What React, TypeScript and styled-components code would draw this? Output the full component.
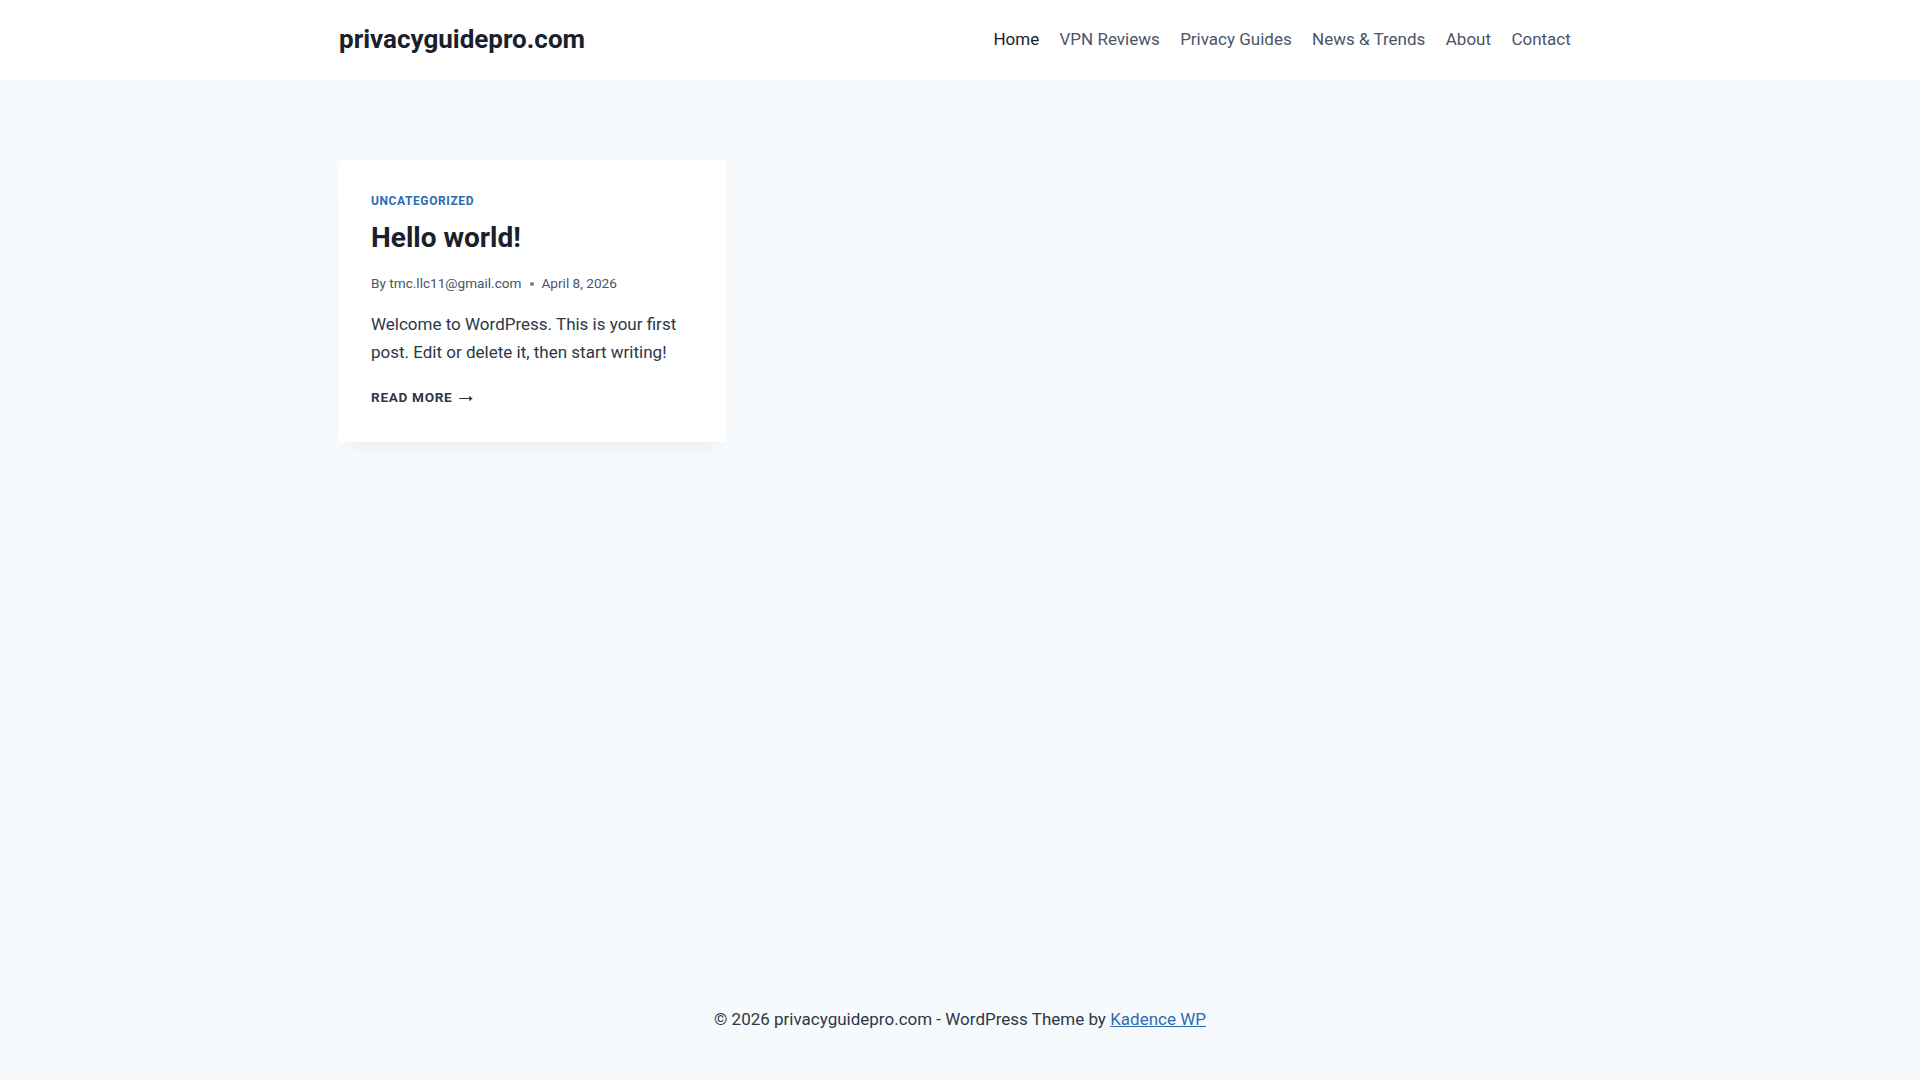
import React from 'react';
import styled, { createGlobalStyle } from 'styled-components';

const GlobalStyle = createGlobalStyle`
  html, body {
    margin: 0;
    padding: 0;
  }

  body {
    font-family: Roboto, 'Noto Sans', 'Liberation Sans', sans-serif;
    font-size: 17px;
    line-height: 1.6;
    color: #2d3748;
    background: #f7fafc;
    -webkit-font-smoothing: antialiased;
  }

  * {
    box-sizing: border-box;
  }
`;

const menuItems = [
  { label: 'Home', current: true },
  { label: 'VPN Reviews' },
  { label: 'Privacy Guides' },
  { label: 'News & Trends' },
  { label: 'About' },
  { label: 'Contact' },
];

const ArrowIcon = () => (
  <svg width="14" height="14" viewBox="0 0 27 28" fill="currentColor" aria-hidden="true">
    <path d="M27 13.953c0 0.141-0.063 0.281-0.156 0.375l-6 5.531c-0.156 0.141-0.359 0.172-0.547 0.094-0.172-0.078-0.297-0.25-0.297-0.453v-3.5h-19.5c-0.281 0-0.5-0.219-0.5-0.5v-1c0-0.281 0.219-0.5 0.5-0.5h19.5v-3.5c0-0.203 0.109-0.375 0.297-0.453s0.391-0.047 0.547 0.078l6 5.469c0.094 0.094 0.156 0.219 0.156 0.359v0z" />
  </svg>
);

const App = () => {
  return (
    <>
      <GlobalStyle />
      <Page>
        <Header>
          <Container>
            <SiteTitle href="#">privacyguidepro.com</SiteTitle>
            <nav>
              <MenuList>
                {menuItems.map((item) => (
                  <li key={item.label}>
                    <MenuLink href="#" $current={item.current}>
                      {item.label}
                    </MenuLink>
                  </li>
                ))}
              </MenuList>
            </nav>
          </Container>
        </Header>

        <Main>
          <Container>
            <PostGrid>
              <Card>
                <Taxonomy href="#">Uncategorized</Taxonomy>
                <EntryTitle>
                  <a href="#">Hello world!</a>
                </EntryTitle>
                <Meta>
                  <span>
                    By <a href="#">tmc.llc11@gmail.com</a>
                  </span>
                  <Dot />
                  <span>April 8, 2026</span>
                </Meta>
                <Summary>
                  Welcome to WordPress. This is your first post. Edit or delete it, then
                  start writing!
                </Summary>
                <MoreLink href="#">
                  Read More
                  <ArrowIcon />
                </MoreLink>
              </Card>
            </PostGrid>
          </Container>
        </Main>

        <Footer>
          <FooterText>
            © 2026 privacyguidepro.com - WordPress Theme by <a href="#">Kadence WP</a>
          </FooterText>
        </Footer>
      </Page>
    </>
  );
};

export default App;

const Page = styled.div`
  min-height: 100vh;
  display: flex;
  flex-direction: column;
`;

const Container = styled.div`
  width: 100%;
  max-width: 1290px;
  margin: 0 auto;
  padding: 0 24px;
`;

const Header = styled.header`
  background: #ffffff;
  height: 80px;
  display: flex;
  align-items: center;

  ${Container} {
    display: flex;
    align-items: center;
    justify-content: space-between;
  }
`;

const SiteTitle = styled.a`
  font-size: 26px;
  font-weight: 700;
  line-height: 1.2;
  color: #1a202c;
  text-decoration: none;
`;

const MenuList = styled.ul`
  display: flex;
  list-style: none;
  margin: 0;
  padding: 0;
`;

const MenuLink = styled.a<{ $current?: boolean }>`
  display: block;
  padding: 0.6em;
  font-size: 17px;
  line-height: 1.6;
  color: ${({ $current }) => ($current ? '#1a202c' : '#4a5568')};
  text-decoration: none;
`;

const Main = styled.main`
  flex: 1;
  padding-top: 80px;
`;

const PostGrid = styled.div`
  display: grid;
  grid-template-columns: repeat(3, 1fr);
  gap: 40px;
`;

const Card = styled.article`
  display: flex;
  flex-direction: column;
  align-items: flex-start;
  background: #ffffff;
  border-radius: 4px;
  padding: 32px 32px 34px;
  box-shadow: 0px 15px 15px -10px rgba(0, 0, 0, 0.05);
`;

const Taxonomy = styled.a`
  font-size: 12px;
  font-weight: 700;
  line-height: 1.6;
  letter-spacing: 0.05em;
  text-transform: uppercase;
  color: #2b6cb0;
  text-decoration: none;
  margin-bottom: 6px;
`;

const EntryTitle = styled.h2`
  margin: 0;
  font-size: 28px;
  font-weight: 700;
  line-height: 1.5;

  a {
    color: #1a202c;
    text-decoration: none;
  }
`;

const Meta = styled.div`
  display: flex;
  align-items: center;
  margin-top: 13.6px;
  font-size: 13.6px;
  line-height: 1.6;
  color: #4a5568;

  a {
    color: #4a5568;
    text-decoration: none;
  }
`;

const Dot = styled.span`
  display: inline-block;
  width: 4px;
  height: 4px;
  border-radius: 50%;
  background: #718096;
  margin: 0 8px;
`;

const Summary = styled.p`
  margin: 15px 0 0;
  font-size: 17px;
  line-height: 1.65;
  color: #2d3748;
`;

const MoreLink = styled.a`
  display: inline-flex;
  align-items: center;
  gap: 7px;
  margin-top: 21px;
  font-size: 13.6px;
  font-weight: 700;
  line-height: 1.6;
  letter-spacing: 0.05em;
  text-transform: uppercase;
  color: #2d3748;
  text-decoration: none;
`;

const Footer = styled.footer`
  padding: 30px 24px 47px;
  text-align: center;
`;

const FooterText = styled.p`
  margin: 0;
  font-size: 17px;
  line-height: 1.6;
  color: #2d3748;

  a {
    color: #2b6cb0;
    text-decoration: underline;
  }
`;
